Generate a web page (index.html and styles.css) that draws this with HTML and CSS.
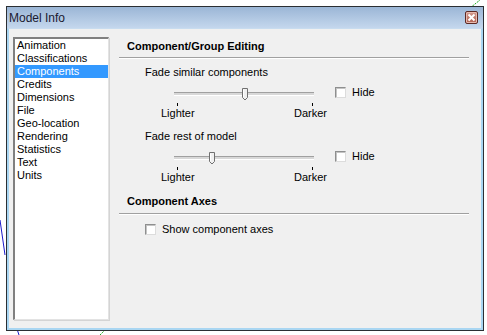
FILE: index.html
```html
<!DOCTYPE html>
<html>
<head>
<meta charset="utf-8">
<link rel="stylesheet" href="styles.css">
</head>
<body>
<svg class="desk desk-a" width="8" height="40" viewBox="0 0 8 40"><path d="M0 0 L5 35" stroke="#1a1acc" stroke-width="1" fill="none"/></svg>
<svg class="desk desk-b" width="12" height="8" viewBox="0 0 12 8"><path d="M0 8 L10 0" stroke="#22aa22" stroke-width="1" stroke-dasharray="2 1" fill="none"/></svg>
<svg class="desk desk-c" width="8" height="6" viewBox="0 0 8 6"><path d="M0 6 L6 0" stroke="#22aa22" stroke-width="1" stroke-dasharray="2 1" fill="none"/></svg>
<svg class="desk desk-d" width="4" height="6" viewBox="0 0 4 6"><path d="M0 0 L2 6" stroke="#1a1acc" stroke-width="1" fill="none"/></svg>
<div class="window">
  <div class="titlebar">
    <span class="title">Model Info</span>
    <span class="close"><svg width="9" height="9" viewBox="0 0 9 9"><path d="M1.5 1.5 L7.5 7.5 M7.5 1.5 L1.5 7.5" stroke="#fff" stroke-width="2"/></svg></span>
  </div>
  <div class="client">
    <ul class="listbox">
      <li>Animation</li>
      <li>Classifications</li>
      <li class="sel">Components</li>
      <li>Credits</li>
      <li>Dimensions</li>
      <li>File</li>
      <li>Geo-location</li>
      <li>Rendering</li>
      <li>Statistics</li>
      <li>Text</li>
      <li>Units</li>
    </ul>
    <div class="panel">
      <div class="heading">Component/Group Editing</div>
      <div class="group">
        <div class="label">Fade similar components</div>
        <div class="sliderrow">
          <div class="slider">
            <div class="track"></div>
            <svg class="thumb" style="left:81px" width="7" height="13" viewBox="0 0 7 13"><path d="M0.5 0.5 H5.5 V9.5 L3 12 L0.5 9.5 Z" fill="#f0f0f0" stroke="#707070"/><path d="M1.5 1.5 V9" stroke="#fff"/></svg>
            <div class="ticks"><span></span><span></span></div>
            <div class="ends"><span>Lighter</span><span>Darker</span></div>
          </div>
          <label class="check"><span class="box"></span>Hide</label>
        </div>
        <div class="label">Fade rest of model</div>
        <div class="sliderrow">
          <div class="slider">
            <div class="track"></div>
            <svg class="thumb" style="left:48px" width="7" height="13" viewBox="0 0 7 13"><path d="M0.5 0.5 H5.5 V9.5 L3 12 L0.5 9.5 Z" fill="#f0f0f0" stroke="#707070"/><path d="M1.5 1.5 V9" stroke="#fff"/></svg>
            <div class="ticks"><span></span><span></span></div>
            <div class="ends"><span>Lighter</span><span>Darker</span></div>
          </div>
          <label class="check"><span class="box"></span>Hide</label>
        </div>
      </div>
      <div class="heading h2">Component Axes</div>
      <label class="check axes"><span class="box"></span>Show component axes</label>
    </div>
  </div>
</div>
</body>
</html>
```
FILE: styles.css
```css
html, body {
  margin: 0;
  padding: 0;
  background: #ffffff;
  width: 487px;
  height: 335px;
  overflow: hidden;
  position: relative;
  font-family: "Liberation Sans", Arial, sans-serif;
  font-size: 11px;
  color: #000;
}
.desk { position: absolute; }
.desk-a { left: 0; top: 220px; }
.desk-b { left: 470px; top: 0; }
.desk-c { left: 100px; top: 329px; }
.desk-d { left: 17px; top: 329px; }

.window {
  position: relative;
  margin: 6px 0 0 6px;
  width: 478px;
  height: 325px;
  box-sizing: border-box;
  border: 1px solid #2b2f33;
  display: flex;
  flex-direction: column;
  background: #f0f0f0;
}
.titlebar {
  height: 21px;
  flex: none;
  display: flex;
  align-items: center;
  justify-content: space-between;
  padding: 0 5px 0 2px;
  background: linear-gradient(#9bb6d6, #c4d7ed);
}
.title {
  font-family: "Liberation Sans", Arial, sans-serif;
  font-size: 12px;
  color: #1a1a30;
}
.close {
  width: 13px;
  height: 13px;
  box-sizing: border-box;
  border: 1px solid #5e2a24;
  border-radius: 2px;
  background: linear-gradient(#d39a8e, #b0604f);
  box-shadow: inset 0 0 0 1px #e6b9ae;
  display: flex;
  align-items: center;
  justify-content: center;
}
.client {
  flex: 1;
  display: flex;
  border: 2px solid #a9d6f2;
  border-top: 1px solid #c8dcef;
  background: #f0f0f0;
  padding: 8px 0 0 4px;
}
.listbox {
  list-style: none;
  margin: 0;
  padding: 0;
  width: 96px;
  height: 283px;
  box-sizing: border-box;
  background: #fff;
  border-top: 2px solid #808080;
  border-left: 2px solid #808080;
  border-right: 1px solid #e3e3e3;
  border-bottom: 1px solid #e3e3e3;
  box-shadow: 1px 1px 0 #d4d4d4;
}
.listbox li {
  height: 13px;
  line-height: 13px;
  padding-left: 2px;
}
.listbox li.sel {
  background: #3399ff;
  color: #fff;
}
.panel {
  flex: 1;
  padding: 3px 0 0 10px;
  margin-right: 12px;
}
.heading {
  font-weight: bold;
  font-size: 11px;
  padding: 0 0 4px 8px;
  line-height: 13px;
  border-bottom: 1px solid #a0a0a0;
  box-shadow: 0 1px 0 #fff;
}
.heading.h2 {
  padding-top: 1px;
  padding-bottom: 5px;
}
.group {
  padding: 8px 0 0 26px;
}
.label {
  line-height: 13px;
  color: #000;
}
.sliderrow {
  display: flex;
  align-items: flex-start;
  margin: 7px 0 3px 0;
}
.slider {
  position: relative;
  width: 166px;
  height: 41px;
  margin-left: 16px;
  flex: none;
}
.track {
  position: absolute;
  left: 13px;
  top: 6px;
  width: 140px;
  height: 2px;
  border-top: 1px solid #a0a0a0;
  border-bottom: 1px solid #fff;
  background: #d8d8d8;
}
.thumb {
  position: absolute;
  top: 2px;
}
.ticks {
  position: absolute;
  left: 16px;
  top: 17px;
  width: 136px;
  display: flex;
  justify-content: space-between;
}
.ticks span {
  width: 1px;
  height: 3px;
  background: #000;
}
.ends {
  position: absolute;
  left: 0;
  top: 21px;
  width: 166px;
  display: flex;
  justify-content: space-between;
  line-height: 13px;
}
.check {
  display: flex;
  align-items: center;
  gap: 6px;
  line-height: 13px;
  margin-left: 8px;
}
.box {
  width: 11px;
  height: 11px;
  box-sizing: border-box;
  background: #fff;
  border: 1px solid #8e8f8f;
  border-right-color: #dcdcdc;
  border-bottom-color: #dcdcdc;
  box-shadow: inset 1px 1px 0 #c4c4c4;
}
.axes {
  margin: 9px 0 0 26px;
}
```
